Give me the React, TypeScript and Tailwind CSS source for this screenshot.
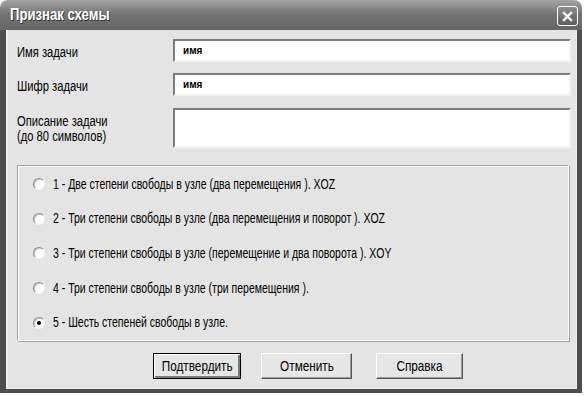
const options = [
  '1 - Две степени свободы в узле (два перемещения ). XOZ',
  '2 - Три степени свободы в узле (два перемещения и поворот ). XOZ',
  '3 - Три степени свободы в узле (перемещение и два поворота ). XOY',
  '4 - Три степени свободы в узле (три перемещения ).',
  '5 - Шесть степеней свободы в узле.',
];

function Radio({ checked }: { checked: boolean }) {
  return (
    <span className="relative shrink-0 flex items-center justify-center w-[12px] h-[12px] rounded-full bg-white border border-t-[#8a8a8a] border-l-[#8a8a8a] border-b-[#f4f4f4] border-r-[#f4f4f4] shadow-[inset_1px_1px_0_#c8c8c8]">
      {checked && <span className="w-[4px] h-[4px] rounded-full bg-black" />}
    </span>
  );
}

function Button({ label, w, isDefault }: { label: string; w: string; isDefault?: boolean }) {
  return (
    <button
      type="button"
      className={
        w +
        ' h-[26px] flex items-center justify-center text-[14px] text-black bg-[#e6e6e6] ' +
        (isDefault
          ? 'border border-black shadow-[inset_1px_1px_0_#ffffff,inset_-2px_-2px_0_#7a7a7a]'
          : 'border border-t-white border-l-white border-b-[#555] border-r-[#555] shadow-[inset_-1px_-1px_0_#9a9a9a]')
      }
    >
      <span className="inline-block whitespace-nowrap scale-x-[0.84]">{label}</span>
    </button>
  );
}

export default function App() {
  const sunken =
    'bg-white border-2 border-t-[#7c7c7c] border-l-[#7c7c7c] border-b-[#f2f2f2] border-r-[#f2f2f2]';
  const label = 'inline-block whitespace-nowrap origin-left scale-x-[0.8] text-[14px] text-black';

  return (
    <div className="w-[586px] h-[396px] bg-white" style={{ fontFamily: '"Liberation Sans", Arial, sans-serif' }}>
      <div className="w-[582px] h-[393px] flex flex-col">
        {/* title bar */}
        <div className="h-[30px] shrink-0 rounded-t-[8px] bg-gradient-to-b from-[#a4a4a4] via-[#727272] to-[#666666] flex items-center justify-between pl-[10px] pr-[4px]">
          <span className="inline-block origin-left scale-x-[0.82] text-white font-bold text-[16px] [text-shadow:1px_1px_0_#333]">Признак схемы</span>
          <span className="w-[21px] h-[20px] mt-[2px] rounded-[3px] border border-white bg-gradient-to-b from-[#8c8c8c] to-[#5e5e5e] flex items-center justify-center">
            <svg width="11" height="11" viewBox="0 0 11 11">
              <path d="M2 2 L9 9 M9 2 L2 9" stroke="white" strokeWidth="2.4" strokeLinecap="square" />
            </svg>
          </span>
        </div>

        {/* frame + client */}
        <div className="flex-1 bg-[#4e4e4e] pl-[6px] pr-[5px] pb-[4px] flex">
          <div className="flex-1 bg-[#e4e4e4] border-l-2 border-b border-r border-[#efefef] pt-[9px] pl-[9px] pr-[5px] flex flex-col">
            <div className="flex items-center h-[23px]">
              <div className="w-[156px] pt-[3px]"><span className={label}>Имя задачи</span></div>
              <div className={'flex-1 h-[23px] flex items-center pl-[8px] text-[10px] font-bold ' + sunken}>имя</div>
            </div>
            <div className="flex items-center h-[23px] mt-[11px]">
              <div className="w-[156px] pt-[3px]"><span className={label}>Шифр задачи</span></div>
              <div className={'flex-1 h-[23px] flex items-center pl-[8px] text-[10px] font-bold ' + sunken}>имя</div>
            </div>
            <div className="flex h-[40px] mt-[12px]">
              <div className="w-[156px] pt-[6px] flex flex-col leading-[15px]">
                <span className={label}>Описание задачи</span>
                <span className={label}>(до 80 символов)</span>
              </div>
              <div className={'flex-1 h-[40px] ' + sunken} />
            </div>

            <div className="mt-[17px] mr-[2px] h-[176px] border border-t-[#a2a2a2] border-l-[#a2a2a2] border-b-white border-r-white shadow-[inset_1px_1px_0_#ffffff,1px_1px_0_#a2a2a2] pl-[15px] pt-[1px] flex flex-col">
              {options.map((o, i) => (
                <div key={i} className="h-[35px] flex items-center gap-[8px]">
                  <Radio checked={i === 4} />
                  <span className="inline-block whitespace-nowrap origin-left scale-x-[0.75] text-[14px] text-black">{o}</span>
                </div>
              ))}
            </div>

            <div className="mt-[12px] flex pl-[136px]">
              <Button label="Подтвердить" w="w-[88px]" isDefault />
              <div className="w-[20px]" />
              <Button label="Отменить" w="w-[91px]" />
              <div className="w-[24px]" />
              <Button label="Справка" w="w-[87px]" />
            </div>
          </div>
        </div>
      </div>
    </div>
  );
}
